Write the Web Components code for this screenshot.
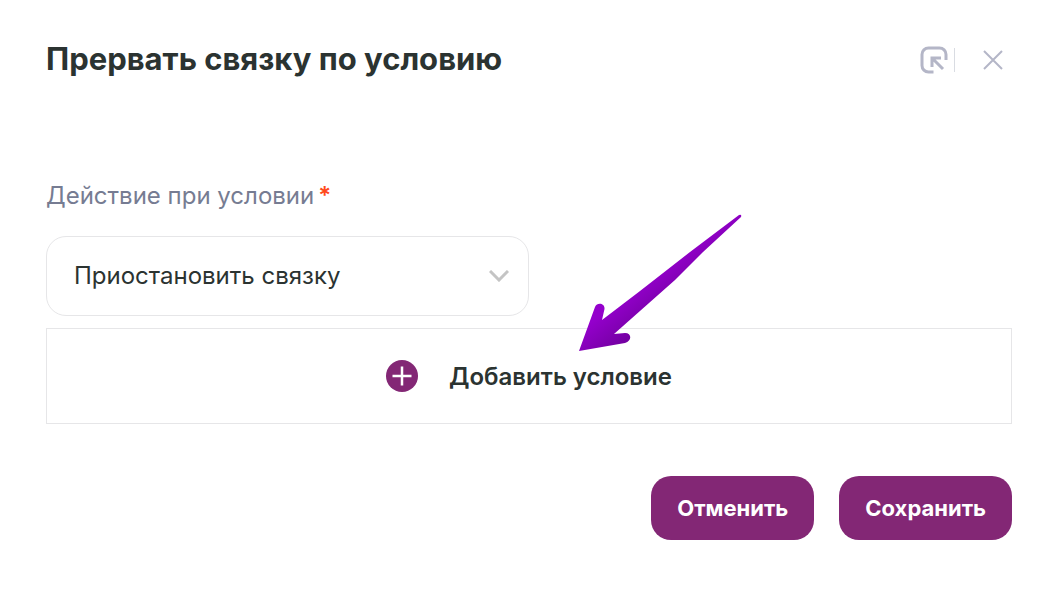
<!DOCTYPE html>
<html lang="ru">
<head>
<meta charset="utf-8">
<meta name="viewport" content="width=device-width, initial-scale=1">
<title>Прервать связку по условию</title>
<style>
    body{
        margin: 0;
        background: #fff;
        color: #2b3331;
        font-family: Inter, "Liberation Sans", sans-serif;
    }
</style>
</head>
<body>
<modal-dialog titulo="Прервать связку по условию">
    <select-field label="Действие при условии" value="Приостановить связку"></select-field>
    <add-condition>Добавить условие</add-condition>
    <action-button slot="footer">Отменить</action-button>
    <action-button slot="footer">Сохранить</action-button>
</modal-dialog>

<script>
class ModalDialog extends HTMLElement{
    constructor(){
        super();
        this.attachShadow({mode: "open"});
        this.titulo = this.getAttribute('titulo');
    }
    getTemplate(){
        const template = document.createElement('template');
        template.innerHTML = `
            <header>
                <h1>${this.titulo}</h1>
                <div class="tools">
                    <button class="expand" type="button" aria-label="Развернуть">
                        <svg width="28" height="28" viewBox="0 0 28 28" fill="none" stroke="#b4b6c7" stroke-width="3">
                            <path d="M13.500 26H8.500a6.500 6.500 0 0 1-6.500-6.500V8.500A6.500 6.500 0 0 1 8.500 2h11a6.500 6.500 0 0 1 6.500 6.500v5.500"/>
                            <path d="M12 21V12H21M12 12L23 23"/>
                        </svg>
                    </button>
                    <button class="close" type="button" aria-label="Закрыть">
                        <svg width="20" height="20" viewBox="0 0 20 20" fill="none" stroke="#b4b6c7" stroke-width="2">
                            <path d="M1 1l18 18M19 1L1 19"/>
                        </svg>
                    </button>
                </div>
            </header>
            <main><slot></slot></main>
            <footer><slot name="footer"></slot></footer>
            ${this.getStyle()}
            `;
        return template;
    }
    getStyle(){
        return `
            <style>
                :host{
                    display: block;
                    padding: 38px 38px 56px 46px;
                }
                header{
                    display: flex;
                    justify-content: space-between;
                    align-items: center;
                    margin-bottom: 100px;
                }
                h1{
                    margin: 0;
                    font-size: 31px;
                    line-height: 42px;
                    font-weight: 700;
                }
                .tools{
                    display: flex;
                    align-items: center;
                    padding: 2px 9px 0 0;
                }
                button{
                    display: flex;
                    padding: 0;
                    border: 0;
                    background: none;
                    cursor: pointer;
                }
                .expand{
                    padding-right: 6px;
                }
                .close{
                    padding-left: 29px;
                    position: relative;
                }
                .close::before{
                    content: "";
                    position: absolute;
                    left: 0;
                    top: -2px;
                    width: 1px;
                    height: 24px;
                    background: #d9dce2;
                }
                main{
                    display: flex;
                    flex-direction: column;
                    gap: 12px;
                }
                footer{
                    display: flex;
                    justify-content: flex-end;
                    gap: 25px;
                    margin-top: 52px;
                }
            </style>
            `;
    }
    connectedCallback(){
        this.shadowRoot.append(this.getTemplate().content.cloneNode(true));
    }
}

class SelectField extends HTMLElement{
    constructor(){
        super();
        this.attachShadow({mode: "open"});
        this.label = this.getAttribute('label');
        this.value = this.getAttribute('value');
    }
    getTemplate(){
        const template = document.createElement('template');
        template.innerHTML = `
            <label for="field">${this.label}<span>*</span></label>
            <div class="box">
                <select id="field" required>
                    <option>${this.value}</option>
                </select>
                <svg width="20" height="12" viewBox="0 0 20 12" fill="none" stroke="#c4c4c4" stroke-width="3">
                    <path d="M1 1l9 9 9-9"/>
                </svg>
            </div>
            ${this.getStyle()}
            `;
        return template;
    }
    getStyle(){
        return `
            <style>
                :host{
                    display: block;
                }
                label{
                    display: block;
                    margin-bottom: 24px;
                    color: #767c92;
                    font-size: 24px;
                    line-height: 32px;
                }
                span{
                    margin-left: 4px;
                    color: #ff4a1c;
                    font-weight: 600;
                }
                .box{
                    display: grid;
                    align-items: center;
                    width: 50%;
                }
                select, svg{
                    grid-area: 1 / 1;
                }
                select{
                    appearance: none;
                    box-sizing: border-box;
                    width: 100%;
                    height: 80px;
                    padding: 0 60px 2px 27px;
                    border: 1px solid #e6e6e8;
                    border-radius: 20px;
                    background: #fff;
                    color: #2b3331;
                    font: inherit;
                    font-size: 24px;
                }
                svg{
                    justify-self: end;
                    margin-right: 20px;
                    pointer-events: none;
                }
            </style>
            `;
    }
    connectedCallback(){
        this.shadowRoot.append(this.getTemplate().content.cloneNode(true));
    }
}

class AddCondition extends HTMLElement{
    constructor(){
        super();
        this.attachShadow({mode: "open"});
    }
    getTemplate(){
        const template = document.createElement('template');
        template.innerHTML = `
            <button type="button">
                <svg width="32" height="32" viewBox="0 0 32 32">
                    <circle cx="16" cy="16" r="16" fill="#832775"/>
                    <path d="M16 6.500v19M6.500 16h19" stroke="#fff" stroke-width="2.500"/>
                </svg>
                <slot></slot>
            </button>
            <svg class="pointer" width="164" height="140" viewBox="0 0 164 140" aria-hidden="true">
                <defs>
                    <linearGradient id="violet" gradientUnits="userSpaceOnUse" x1="68" y1="64" x2="90" y2="92">
                        <stop offset="0" stop-color="#9400cc"/>
                        <stop offset="1" stop-color="#7500a3"/>
                    </linearGradient>
                </defs>
                <path fill="url(#violet)" d="M0 137L16 93C18 88 26 89 25.500 95L23 106L61 77L111 38L160 1Q163 0 162 3L124 38L96 66L35 120L46 119C53 119 53 127 46 129Z"/>
            </svg>
            ${this.getStyle()}
            `;
        return template;
    }
    getStyle(){
        return `
            <style>
                :host{
                    display: block;
                    position: relative;
                }
                button{
                    display: flex;
                    justify-content: center;
                    align-items: center;
                    gap: 31px;
                    width: 100%;
                    height: 96px;
                    padding: 0;
                    border: 1px solid #e6e6e8;
                    background: #fff;
                    color: #2b3331;
                    font: inherit;
                    font-size: 24px;
                    font-weight: 600;
                    cursor: pointer;
                }
                .pointer{
                    position: absolute;
                    left: calc(50% + 50px);
                    bottom: 70px;
                    pointer-events: none;
                }
            </style>
            `;
    }
    connectedCallback(){
        this.shadowRoot.append(this.getTemplate().content.cloneNode(true));
    }
}

class ActionButton extends HTMLElement{
    constructor(){
        super();
        this.attachShadow({mode: "open"});
    }
    getTemplate(){
        const template = document.createElement('template');
        template.innerHTML = `
            <button type="button"><slot></slot></button>
            ${this.getStyle()}
            `;
        return template;
    }
    getStyle(){
        return `
            <style>
                :host{
                    display: block;
                }
                button{
                    height: 64px;
                    padding: 0 26px;
                    border: 0;
                    border-radius: 20px;
                    background: #832775;
                    color: #fff;
                    font: inherit;
                    font-size: 22px;
                    font-weight: 700;
                    cursor: pointer;
                }
            </style>
            `;
    }
    connectedCallback(){
        this.shadowRoot.append(this.getTemplate().content.cloneNode(true));
    }
}

customElements.define('modal-dialog',ModalDialog);
customElements.define('select-field',SelectField);
customElements.define('add-condition',AddCondition);
customElements.define('action-button',ActionButton);
</script>
</body>
</html>
